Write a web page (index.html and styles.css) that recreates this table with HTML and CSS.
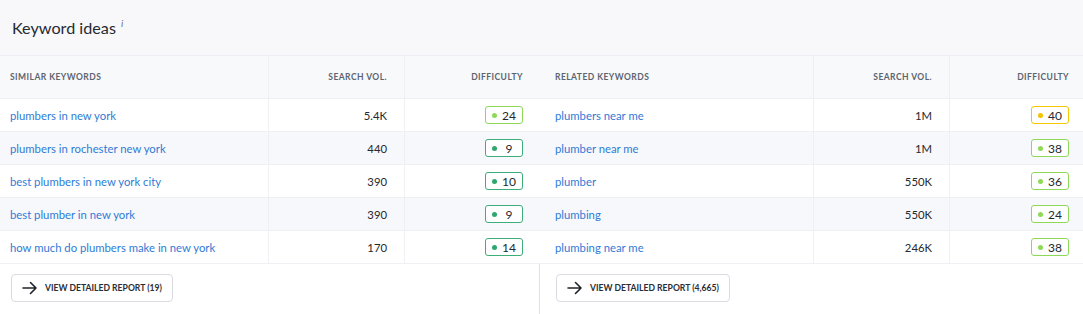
FILE: index.html
```html
<!DOCTYPE html>
<html>
<head>
<meta charset="utf-8">
<link rel="stylesheet" href="styles.css">
</head>
<body>
<div class="card">
  <div class="title">Keyword ideas <span class="info">i</span></div>
  <div class="panels">
    <section class="panel panel-left">
      <div class="table">
        <div class="th kw">Similar keywords</div>
        <div class="th num">Search vol.</div>
        <div class="th num">Difficulty</div>

        <div class="td kw"><a>plumbers in new york</a></div>
        <div class="td num">5.4K</div>
        <div class="td num"><span class="badge lime"><i></i><b>24</b></span></div>

        <div class="td kw alt"><a>plumbers in rochester new york</a></div>
        <div class="td num alt">440</div>
        <div class="td num alt"><span class="badge green"><i></i><b>9</b></span></div>

        <div class="td kw"><a>best plumbers in new york city</a></div>
        <div class="td num">390</div>
        <div class="td num"><span class="badge green"><i></i><b>10</b></span></div>

        <div class="td kw alt"><a>best plumber in new york</a></div>
        <div class="td num alt">390</div>
        <div class="td num alt"><span class="badge green"><i></i><b>9</b></span></div>

        <div class="td kw"><a>how much do plumbers make in new york</a></div>
        <div class="td num">170</div>
        <div class="td num"><span class="badge green"><i></i><b>14</b></span></div>
      </div>
      <div class="foot">
        <button class="btn"><svg width="16" height="14" viewBox="0 0 16 14"><path d="M1 7h13M8.5 1.5L14 7l-5.5 5.5" fill="none" stroke="#1f2329" stroke-width="1.6" stroke-linecap="round" stroke-linejoin="round"/></svg><span>View detailed report (19)</span></button>
      </div>
    </section>
    <section class="panel panel-right">
      <div class="table">
        <div class="th kw">Related keywords</div>
        <div class="th num">Search vol.</div>
        <div class="th num">Difficulty</div>

        <div class="td kw"><a>plumbers near me</a></div>
        <div class="td num">1M</div>
        <div class="td num"><span class="badge yellow"><i></i><b>40</b></span></div>

        <div class="td kw alt"><a>plumber near me</a></div>
        <div class="td num alt">1M</div>
        <div class="td num alt"><span class="badge lime"><i></i><b>38</b></span></div>

        <div class="td kw"><a>plumber</a></div>
        <div class="td num">550K</div>
        <div class="td num"><span class="badge lime"><i></i><b>36</b></span></div>

        <div class="td kw alt"><a>plumbing</a></div>
        <div class="td num alt">550K</div>
        <div class="td num alt"><span class="badge lime"><i></i><b>24</b></span></div>

        <div class="td kw"><a>plumbing near me</a></div>
        <div class="td num">246K</div>
        <div class="td num"><span class="badge lime"><i></i><b>38</b></span></div>
      </div>
      <div class="foot">
        <button class="btn"><svg width="16" height="14" viewBox="0 0 16 14"><path d="M1 7h13M8.5 1.5L14 7l-5.5 5.5" fill="none" stroke="#1f2329" stroke-width="1.6" stroke-linecap="round" stroke-linejoin="round"/></svg><span>View detailed report (4,665)</span></button>
      </div>
    </section>
  </div>
</div>
</body>
</html>
```

FILE: styles.css
```css
* { box-sizing: border-box; }
html, body { margin: 0; padding: 0; }
body {
  width: 1083px;
  height: 314px;
  overflow: hidden;
  background: #ffffff;
  font-family: Lato, "Liberation Sans", sans-serif;
  color: #25282e;
}
.card { width: 1083px; }
.title {
  height: 56px;
  background: #f8f8fb;
  border-bottom: 1px solid #eceef3;
  padding: 17px 0 0 12px;
  font-size: 16.2px;
  line-height: 22px;
  color: #262a31;
}
.info {
  font-size: 10px;
  font-style: italic;
  color: #6d7480;
  vertical-align: top;
  position: relative;
  top: -5px;
  margin-left: 1px;
}
.panels {
  display: flex;
  height: 258px;
}
.panel { display: flex; flex-direction: column; }
.panel-left { width: 540px; border-right: 1px solid #dfe2ea; }
.panel-right { width: 543px; }
.table { display: grid; }
.panel-left .table { grid-template-columns: 268px 136px 136px; }
.panel-right .table { grid-template-columns: 273px 136px 134px; }
.th, .td {
  border-bottom: 1px solid #eef0f4;
  display: flex;
  align-items: center;
}
.th {
  height: 43px;
  background: #f8f9fb;
  font-size: 8.5px;
  font-weight: 700;
  letter-spacing: 0.45px;
  text-transform: uppercase;
  color: #5c6470;
}
.td {
  height: 33px;
  font-size: 11.3px;
  background: #ffffff;
}
.td.alt { background: #f7f8fb; }
.kw { padding-left: 10px; }
.panel-right .kw { padding-left: 15px; }
.num {
  justify-content: flex-end;
  padding-right: 17px;
  border-left: 1px solid #eef0f4;
}
.panel-right .num:nth-child(3n) { padding-right: 14px; }
.td a { color: #2f7bd6; text-decoration: none; }
.badge {
  display: inline-flex;
  align-items: center;
  width: 38px;
  height: 18px;
  border: 1px solid;
  border-radius: 3px;
  padding: 0 0 0 6px;
  background: #ffffff;
}
.badge i {
  width: 5px;
  height: 5px;
  border-radius: 50%;
  flex: none;
}
.badge b {
  flex: 1;
  text-align: center;
  font-weight: 400;
  font-size: 12px;
  color: #25282e;
  padding-right: 1px;
}
.lime { border-color: #8ed957; }
.lime i { background: #8ed957; }
.green { border-color: #3dae79; }
.green i { background: #2fa66e; }
.yellow { border-color: #f4c900; }
.yellow i { background: #f4c200; }
.foot { padding: 10px 0 0 11px; }
.panel-right .foot { padding-left: 16px; }
.btn {
  display: inline-flex;
  align-items: center;
  gap: 7px;
  height: 28px;
  padding: 0 10px 0 10px;
  border: 1px solid #d8dbe2;
  border-radius: 4px;
  background: #ffffff;
  font-family: Lato, "Liberation Sans", sans-serif;
  font-size: 8.6px;
  font-weight: 700;
  text-transform: uppercase;
  color: #2a2e35;
  letter-spacing: 0;
}
.btn svg { flex: none; }
```
